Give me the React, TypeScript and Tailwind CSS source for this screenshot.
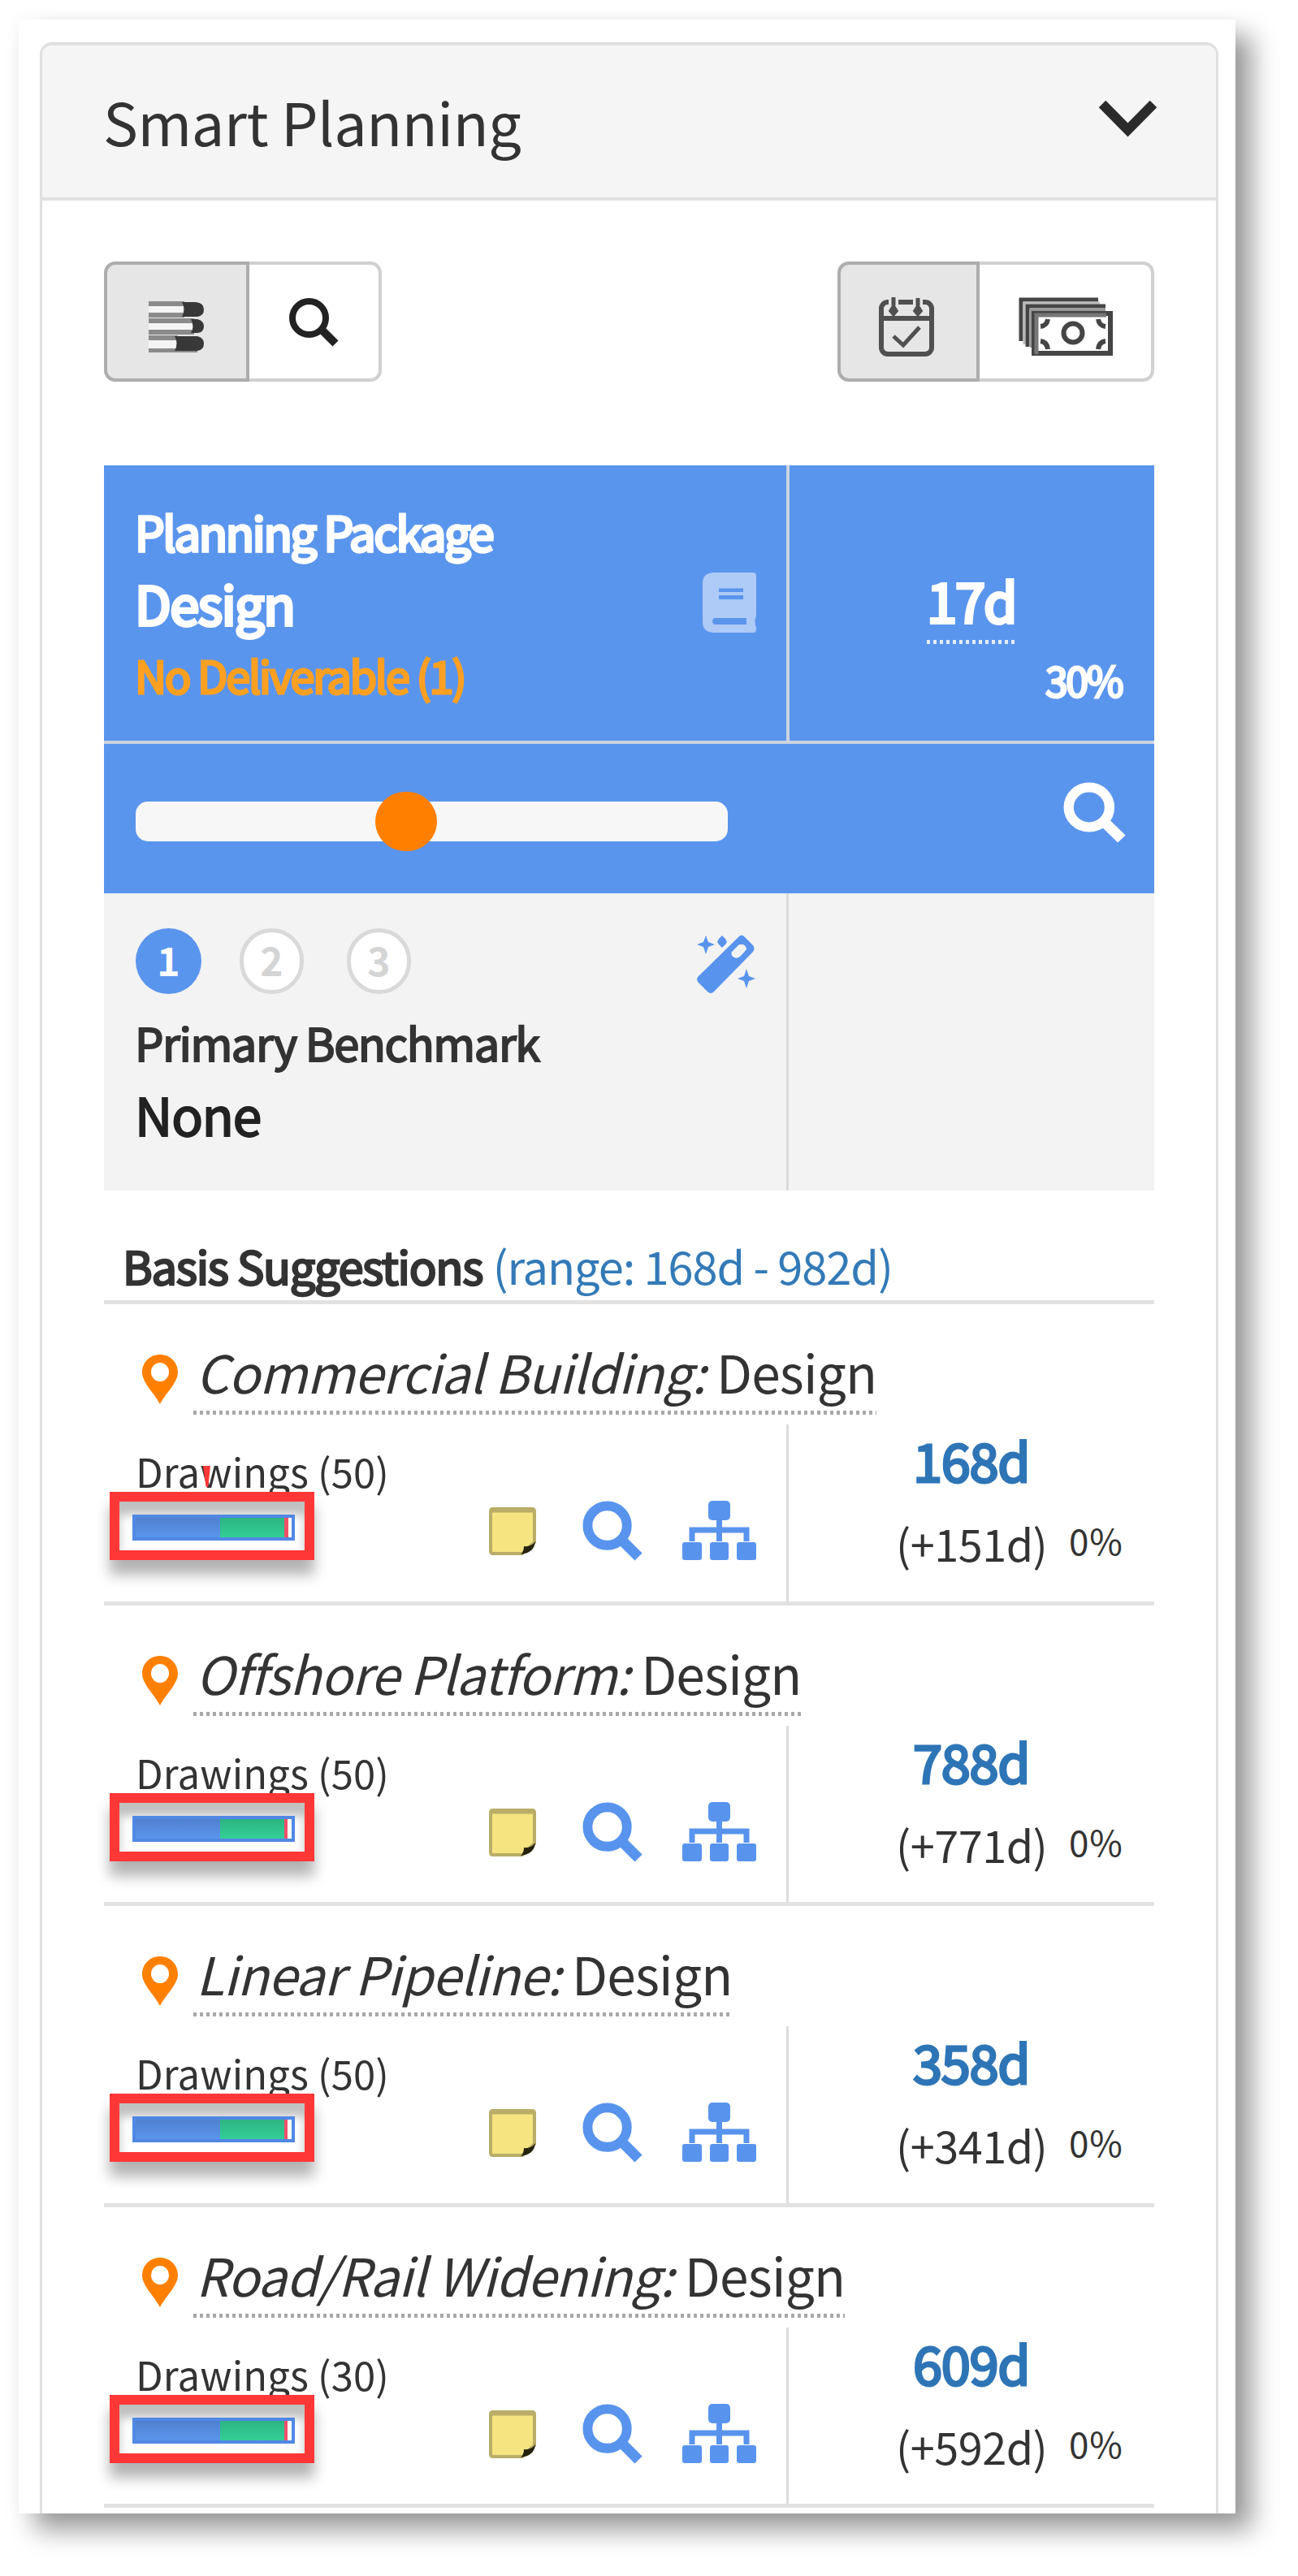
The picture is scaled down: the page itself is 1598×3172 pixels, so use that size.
interface Suggestion {
  project: string;
  drawings: number;
  duration: string;
  delta: string;
  green: number;
  red: number;
  marker?: boolean;
  titleWidth: string;
}

const suggestions: Suggestion[] = [
  { project: "Commercial Building:", drawings: 50, duration: "168d", delta: "(+151d)", green: 79, red: 5, marker: true, titleWidth: "w-[841px]" },
  { project: "Offshore Platform:", drawings: 50, duration: "788d", delta: "(+771d)", green: 79, red: 4, titleWidth: "w-[749px]" },
  { project: "Linear Pipeline:", drawings: 50, duration: "358d", delta: "(+341d)", green: 79, red: 4, titleWidth: "w-[663px]" },
  { project: "Road/Rail Widening:", drawings: 30, duration: "609d", delta: "(+592d)", green: 79, red: 4, titleWidth: "w-[802px]" },
];

function SearchIcon({ className }: { className: string }) {
  return (
    <svg className={className} viewBox="0 0 76 76" fill="none" stroke="currentColor" preserveAspectRatio="none">
      <circle cx="31" cy="31" r="24.5" strokeWidth="12" />
      <path d="M49 49 L70 70" strokeWidth="13" />
    </svg>
  );
}

function ThinSearchIcon() {
  return (
    <svg className="w-[62px] h-[61px] text-[#222]" viewBox="0 0 62 61" fill="none" stroke="currentColor">
      <circle cx="25.5" cy="24.5" r="20.5" strokeWidth="8" />
      <path d="M41 39 L58 56" strokeWidth="10" />
    </svg>
  );
}

function BooksIcon() {
  return (
    <svg className="w-[69px] h-[64px]" viewBox="0 0 69 64">
      <path d="M0 2H42V18H0Z M0 23H54V38H0Z M0 43H34V60H0Z" fill="#f4f4f4" />
      <path d="M0 0H44V6H0Z M0 14H44V20H0Z M0 21H56V27H0Z M0 35H56V41H0Z M0 42H36V48H0Z M0 58H60V63H0Z" fill="#8a8a8a" />
      <path d="M41 1H58Q68 2 68 10Q68 18 60 19H41Q46 10 41 1Z" fill="#383838" />
      <path d="M52 22H60Q68 24 68 31Q68 38 60 39H52Q57 31 52 22Z" fill="#383838" />
      <path d="M32 43H60Q68 45 68 52Q68 60 60 61H32Q37 52 32 43Z" fill="#383838" />
    </svg>
  );
}

function CalendarIcon() {
  return (
    <svg className="w-[68px] h-[74px]" viewBox="0 0 68 74" fill="none" stroke="#505050">
      <rect x="3" y="6" width="62" height="64" rx="8" strokeWidth="6" />
      <path d="M3 26 H65" strokeWidth="6" />
      <path d="M12 6H24 M42 6H54" stroke="#e6e6e6" strokeWidth="7" />
      <path d="M18 0V10 M48 1V10" strokeWidth="5" />
      <path d="M18 9L23 17L18 23L13 17Z M48 9L53 17L48 23L43 17Z" fill="#505050" strokeWidth="2" />
      <path d="M18 48L30 59L50 37" strokeWidth="5" />
    </svg>
  );
}

function MoneyIcon() {
  return (
    <svg className="w-[116px] h-[73px]" viewBox="0 0 116 73" fill="none" stroke="#454545">
      <path d="M98 3H3V54" strokeWidth="5" />
      <path d="M100 7H7V58" stroke="#bbb" strokeWidth="3" />
      <path d="M107 11H11V61" strokeWidth="5" />
      <path d="M107 16H16V62" stroke="#999" strokeWidth="4" />
      <rect x="19" y="20" width="94" height="49" strokeWidth="6" />
      <path d="M22 70V22H108" stroke="#777" strokeWidth="5" />
      <circle cx="67" cy="44" r="11.5" strokeWidth="6" />
      <path d="M27 36Q35 35 36 27 M98 27Q99 35 107 36 M27 54Q35 55 36 64 M98 64Q99 55 107 54" strokeWidth="6" />
    </svg>
  );
}

function WandIcon() {
  return (
    <svg className="w-[72px] h-[74px]" viewBox="0 0 72 74" fill="#5894ed">
      <path fillRule="evenodd" d="M52 2Q55 -1 58 2L69 13Q72 17 69 21L21 70Q17 74 13 70L2 59Q-2 55 2 51Z M52 12L43 21Q41 26 46 28Q50 30 54 26L61 18Q61 14 57 12Z" />
      <path d="M11 1L14 9L22 12L14 15L11 24L8 15L0 12L8 9Z M31 1L35 5L37 9L35 12L31 16L27 12L25 9L27 5Z M61 42L64 51L72 54L64 57L61 66L58 57L50 54L58 51Z" />
    </svg>
  );
}

function BookIcon() {
  return (
    <svg className="w-[66px] h-[74px]" viewBox="0 0 66 74">
      <path d="M13 0H62Q66 0 66 4V53Q63 60 66 68V70Q66 74 62 74H13Q0 73 0 61V13Q0 1 13 0Z" fill="#aecaf7" />
      <path d="M20 19.500H50V24H20Z M20 28H50V33H20Z M14 56H54V64H14Q10 60 14 56Z" fill="#5a95ed" />
    </svg>
  );
}

function SitemapIcon() {
  return (
    <svg className="w-[91px] h-[73px]" viewBox="0 0 91 73" fill="#5894ed">
      <rect x="32" y="0" width="27" height="24" rx="5" />
      <rect x="0" y="51" width="24" height="22" rx="3" />
      <rect x="34" y="51" width="23" height="22" rx="3" />
      <rect x="67" y="51" width="24" height="22" rx="3" />
      <path d="M45.500 22V50 M12 50V36H79V50" fill="none" stroke="#5894ed" strokeWidth="7" />
    </svg>
  );
}

function PinIcon() {
  return (
    <svg className="w-[44px] h-[61px]" viewBox="0 0 44 61">
      <path fillRule="evenodd" d="M22 0C34 0 44 9 44 22C44 34 29 48 22 61C15 48 0 34 0 22C0 9 10 0 22 0Z M22 10A11 11.500 0 1 0 22 33A11 11.500 0 1 0 22 10Z" fill="#ff8000" />
    </svg>
  );
}

function NoteIcon() {
  return (
    <svg className="w-[58px] h-[60px]" viewBox="0 0 58 60">
      <path d="M5 2H53Q56 2 56 5V43L41 57H5Q2 57 2 54V5Q2 2 5 2Z" fill="#f5e480" stroke="#b9ad68" strokeWidth="4" />
      <path d="M2 4H56" stroke="#b9ad68" strokeWidth="5" />
      <path d="M57 42Q56 56 39 58Q43 55 43 48Q52 49 57 42Z" fill="#26220a" />
    </svg>
  );
}

function Step({ n, active }: { n: number; active?: boolean }) {
  return (
    <div
      className={
        active
          ? "w-[81px] h-[81px] rounded-full bg-[#5a95ed] text-white flex items-center justify-center"
          : "w-[79px] h-[81px] rounded-full bg-white border-[5px] border-[#d9d9d9] text-[#d4d4d4] flex items-center justify-center"
      }
    >
      <span className="text-[48px] leading-none font-bold pb-[5px]">{n}</span>
    </div>
  );
}

function SuggestionRow({ item }: { item: Suggestion }) {
  return (
    <div className="h-[370.5px] border-b-[5px] border-[#e2e2e2] flex flex-col">
      <div className="h-[148px] flex shrink-0">
        <div className="pl-[47px] pt-[62px]">
          <PinIcon />
        </div>
        <div className={`ml-[19px] pt-[50px] ${item.titleWidth}`}>
          <div className="pl-[3px] text-[64px] leading-none whitespace-nowrap tracking-[-0.8px]">
            <i>{item.project}</i> Design
          </div>
          <div className="mt-[17px] h-[5px] bg-[repeating-linear-gradient(90deg,#a8a8a8_0_4px,transparent_4px_8px)]" />
        </div>
      </div>
      <div className="flex grow">
        <div className="w-[843px] border-r-[3px] border-[#dcdcdc] flex">
          <div className="w-[474px] pt-[32px]">
            <div className="relative pl-[39px] text-[49px] leading-none whitespace-nowrap tracking-[0.1px]">
              Drawings ({item.drawings})
              {item.marker && (
                <div className="absolute left-[122px] top-[19px] w-[9px] h-[26px] bg-[#ff3737] [clip-path:polygon(0_0,100%_0,70%_100%,40%_100%)]" />
              )}
            </div>
            <div className="relative ml-[7px] mt-[2px] w-[252px] h-[84px] border-[12px] border-[#ff3737] pt-[16px] pl-[16px] shadow-[0_18px_16px_rgba(0,0,0,0.3),inset_0_16px_12px_rgba(0,0,0,0.25)]">
              <div className="w-[200px] h-[32px] border-[4px] border-[#5088e4] bg-white flex">
                <div className="w-[104px] bg-gradient-to-b from-[#5080d0] to-[#5a95ed]" />
                <div className="bg-gradient-to-b from-[#2db482] to-[#33cf96]" style={{ width: item.green }} />
                <div className="bg-[#f0506a]" style={{ width: item.red }} />
              </div>
            </div>
          </div>
          <div className="pt-[102px]">
            <NoteIcon />
          </div>
          <div className="pt-[94px] pl-[57px]">
            <SearchIcon className="w-[75px] h-[75px] text-[#5894ed]" />
          </div>
          <div className="pt-[94px] pl-[48px]">
            <SitemapIcon />
          </div>
        </div>
        <div className="grow pl-[132px]">
          <div className="pl-[21px] pt-[11px] text-[65px] leading-none tracking-[-1.3px] text-[#2e75b6] [-webkit-text-stroke:3px_#2e75b6]">{item.duration}</div>
          <div className="pt-[43px] flex">
            <span className="w-[213px] text-[54px] leading-none whitespace-nowrap tracking-[-0.5px]">{item.delta}</span>
            <span className="pt-[1px] text-[44px] leading-none tracking-[0.8px]">0%</span>
          </div>
        </div>
      </div>
    </div>
  );
}

export default function App() {
  return (
    <div className="w-[1598px] h-[3172px] overflow-hidden bg-white pt-[24px] pl-[23px] text-[#333] font-['Noto_Sans_CJK_SC','Noto_Sans',sans-serif]">
      <div className="w-[1498px] h-[3071px] bg-white pt-[28px] pl-[26px] shadow-[20px_20px_30px_rgba(0,0,0,0.4),0_0_22px_rgba(0,0,0,0.03)]">
        <div className="w-[1451px] h-[3043px] overflow-hidden rounded-t-[15px] border-x-[3px] border-t-[4px] border-[#e0e0e0]">
          <div className="h-[191px] bg-[#f5f5f5] border-b-[4px] border-[#e0e0e0] flex justify-between pl-[75px] pr-[73px]">
            <h1 className="pt-[57px] text-[72px] leading-none whitespace-nowrap tracking-[-0.4px]">Smart Planning</h1>
            <svg className="mt-[67px] w-[71px] h-[47px]" viewBox="0 0 71 47" fill="none" stroke="#2b2b2b" strokeWidth="12">
              <path d="M4 5L35.500 37L67 5" />
            </svg>
          </div>

          <div className="px-[76px] pt-[75px]">
            <div className="flex justify-between">
              <div className="flex h-[148px]">
                <div className="w-[179px] rounded-l-[14px] border-[4px] border-[#adadad] bg-[#e6e6e6] pl-[51px] pt-[45px]">
                  <BooksIcon />
                </div>
                <div className="w-[163px] rounded-r-[14px] border-y-[4px] border-r-[4px] border-[#d0d0d0] pl-[48px] pt-[41px]">
                  <ThinSearchIcon />
                </div>
              </div>
              <div className="flex h-[148px]">
                <div className="w-[175px] rounded-l-[14px] border-[4px] border-[#adadad] bg-[#e6e6e6] pl-[47px] pt-[40px]">
                  <CalendarIcon />
                </div>
                <div className="w-[215px] rounded-r-[14px] border-y-[4px] border-r-[4px] border-[#d0d0d0] pl-[48px] pt-[40px]">
                  <MoneyIcon />
                </div>
              </div>
            </div>

            <div className="mt-[103px] w-[1293px] bg-[#5a95ed] text-white">
              <div className="h-[343px] border-b-[4px] border-[#ccd3df] flex">
                <div className="w-[844px] border-r-[4px] border-[#ccd3df] flex">
                  <div className="w-[698px] pl-[38px] pt-[52px] leading-none whitespace-nowrap">
                    <div className="text-[58px] leading-none tracking-[-2.35px] [-webkit-text-stroke:3.5px_white]">Planning Package</div>
                    <div className="mt-[27px] text-[65px] leading-none tracking-[-1.5px] [-webkit-text-stroke:4px_white]">Design</div>
                    <div className="mt-[29px] text-[54px] leading-none tracking-[-2.2px] text-[#ffa022] [-webkit-text-stroke:3px_#ffa022]">No Deliverable (1)</div>
                  </div>
                  <div className="pl-[39px] pt-[132px]">
                    <BookIcon />
                  </div>
                </div>
                <div className="grow">
                  <div className="ml-[169px] mt-[131px] w-[111px]">
                    <div className="text-[67px] leading-none tracking-[-2.2px] [-webkit-text-stroke:4px_white]">17d</div>
                    <div className="mt-[17px] h-[5px] bg-[repeating-linear-gradient(90deg,#e4edfb_0_4px,transparent_4px_8px)]" />
                  </div>
                  <div className="mt-[18px] pr-[40px] text-right text-[50px] leading-none tracking-[-2.5px] [-webkit-text-stroke:3px_white]">30%</div>
                </div>
              </div>
              <div className="h-[184px] flex justify-between pl-[39px] pr-[34px]">
                <div className="relative mt-[71px] w-[729px] h-[49px] rounded-[15px] bg-[#f7f7f7]">
                  <div className="absolute left-[295px] top-[-12px] w-[76px] h-[73px] rounded-full bg-[#ff8000]" />
                </div>
                <div className="pt-[47px]">
                  <SearchIcon className="w-[78px] h-[76px] text-white" />
                </div>
              </div>
            </div>

            <div className="w-[1293px] h-[366px] bg-[#f3f3f3] flex">
              <div className="w-[843px] border-r-[3px] border-[#dcdcdc] pl-[38px] pt-[43px]">
                <div className="flex pl-px">
                  <Step n={1} active />
                  <div className="pl-[47px]">
                    <Step n={2} />
                  </div>
                  <div className="pl-[53px]">
                    <Step n={3} />
                  </div>
                  <div className="pl-[352px] pt-[8px]">
                    <WandIcon />
                  </div>
                </div>
                <div className="mt-[30px] text-[56px] leading-none tracking-[-1.4px] whitespace-nowrap [-webkit-text-stroke:2px_#333]">Primary Benchmark</div>
                <div className="mt-[28px] text-[64px] leading-none tracking-[-1.1px] text-[#222] [-webkit-text-stroke:2px_#222]">None</div>
              </div>
            </div>

            <div className="w-[1293px]">
              <div className="h-[140px] border-b-[5px] border-[#e2e2e2] pl-[23px] pt-[64px] text-[56px] leading-none whitespace-nowrap">
                <span className="tracking-[-1.3px] [-webkit-text-stroke:2.5px_#333]">Basis Suggestions</span>{" "}
                <span className="tracking-[-1.1px] text-[#337ab7]">(range: 168d - 982d)</span>
              </div>
              {suggestions.map((item) => (
                <SuggestionRow key={item.project} item={item} />
              ))}
            </div>
          </div>
        </div>
      </div>
    </div>
  );
}
